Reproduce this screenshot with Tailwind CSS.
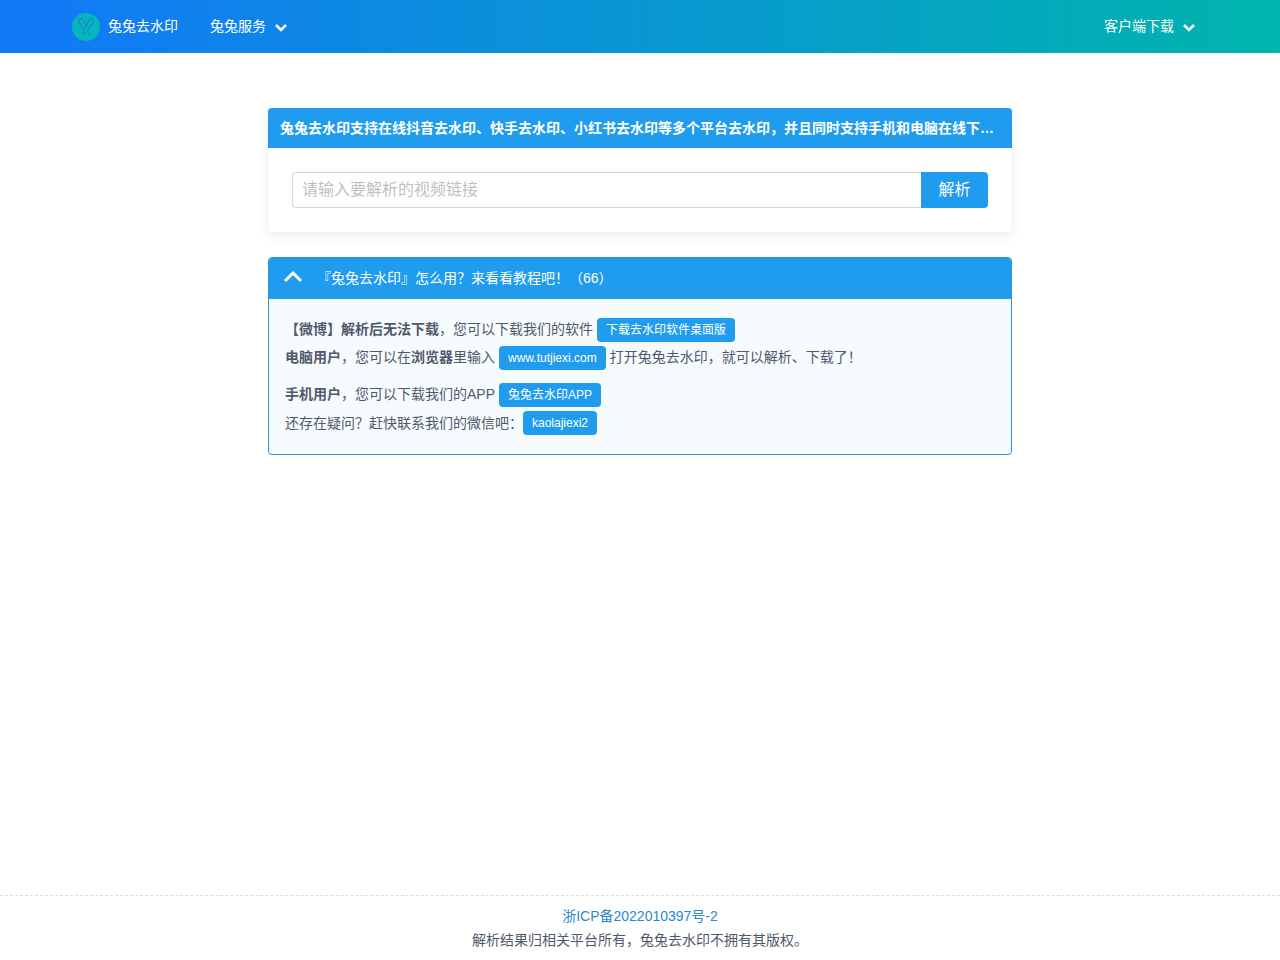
<!DOCTYPE html>
<html lang="zh-CN">
<head>
<meta charset="utf-8">
<meta name="viewport" content="width=device-width, initial-scale=1">
<title>兔兔去水印</title>
<script src="https://cdn.jsdelivr.net/npm/@tailwindcss/browser@4"></script>
</head>
<body class="flex min-h-screen flex-col bg-white font-['Liberation_Sans','Noto_Sans_CJK_SC',sans-serif] text-sm leading-6 text-[#50596c]">
<header class="bg-linear-to-r/srgb from-[#1278f8] to-[#00b5ad] text-white">
  <nav class="mx-auto flex h-[53px] max-w-[1152px] items-center px-2">
    <a href="#" class="flex items-center gap-2">
      <svg class="size-7" viewBox="0 0 28 28" fill="none" aria-hidden="true">
        <circle cx="14" cy="14" r="14" fill="#06b6bb"/>
        <path d="M10.3 21.2c1.7-.6 2.4-2.5 1.7-4.4L7.3 9.6C6 7.2 7 5.4 8.9 5.5c3.3.3 3.8 5 5.1 9.2 1.3-4.2 1.8-8.9 5.1-9.2 1.9-.1 2.9 1.7 1.6 4.1L16 16.8c-.7 1.9 0 3.8 1.7 4.4" stroke="#168ccb" stroke-width="1.4" stroke-linecap="round" stroke-linejoin="round"/>
      </svg>
      <span class="pb-px">兔兔去水印</span>
    </a>
    <button type="button" class="ml-8 flex items-center gap-2"><span class="pb-px">兔兔服务</span>
      <svg class="size-3.5" viewBox="0 0 14 14" fill="none" stroke="currentColor" stroke-width="2.5" aria-hidden="true"><path d="M2 5l5 5 5-5"/></svg>
    </button>
    <button type="button" class="mr-3 ml-auto flex items-center gap-2"><span class="pb-px">客户端下载</span>
      <svg class="size-3.5" viewBox="0 0 14 14" fill="none" stroke="currentColor" stroke-width="2.5" aria-hidden="true"><path d="M2 5l5 5 5-5"/></svg>
    </button>
  </nav>
</header>

<main class="mx-auto w-full max-w-[744px] flex-1 pt-[55px]">
  <section class="rounded-sm shadow-[0_4px_12px_rgba(0,0,0,0.08)]">
    <h1 class="truncate rounded-t-sm bg-[#209cee] px-3 py-2 font-bold text-white">兔兔去水印支持在线抖音去水印、快手去水印、小红书去水印等多个平台去水印，并且同时支持手机和电脑在线下载视频</h1>
    <form class="flex p-6">
      <input type="text" aria-label="视频链接" placeholder="请输入要解析的视频链接" class="h-9 min-w-0 flex-1 rounded-l-sm border border-r-0 border-[#d5d8d8] px-[9px] text-base placeholder:text-[#bfbfbf]">
      <button type="button" class="h-9 w-[67px] rounded-r-sm bg-[#209cee] text-base text-white">解析</button>
    </form>
  </section>

  <section class="mt-[25px] overflow-hidden rounded-sm border border-[#2b95cf] bg-[#f6fbfe]">
    <button type="button" aria-expanded="true" class="flex h-[41px] w-full items-center gap-[14px] bg-[#209cee] px-[14px] pb-0.5 text-left text-white">
      <svg class="size-5" viewBox="0 0 20 20" fill="none" stroke="currentColor" stroke-width="3" aria-hidden="true"><path d="M2 13l8-8 8 8"/></svg>
      <span>『兔兔去水印』怎么用？来看看教程吧！（66）</span>
    </button>
    <div class="px-4 py-[17px]">
      <p class="flex h-7 items-center gap-1"><span class="pb-0.5"><strong>【微博】解析后无法下载</strong>，您可以下载我们的软件</span><a href="#" class="h-6 rounded-sm bg-[#209cee] px-[9px] text-xs leading-6 text-white">下载去水印软件桌面版</a></p>
      <p class="flex h-7 items-center gap-1"><span class="pb-0.5"><strong>电脑用户</strong>，您可以在<strong>浏览器</strong>里输入</span><a href="#" class="h-6 rounded-sm bg-[#209cee] px-[9px] text-xs leading-6 text-white">www.tutjiexi.com</a><span class="pb-0.5">打开兔兔去水印，就可以解析、下载了！</span></p>
      <p class="mt-[9px] flex h-7 items-center gap-1"><span class="pb-0.5"><strong>手机用户</strong>，您可以下载我们的APP</span><a href="#" class="h-6 rounded-sm bg-[#209cee] px-[9px] text-xs leading-6 text-white">兔兔去水印APP</a></p>
      <p class="flex h-7 items-center"><span>还存在疑问？赶快联系我们的微信吧：</span><span class="h-6 rounded-sm bg-[#209cee] px-[9px] text-xs leading-6 text-white">kaolajiexi2</span></p>
    </div>
  </section>
</main>

<footer class="border-t border-dashed border-[#dbdfe0] pt-2 pb-2 text-center">
  <p><a href="#" class="text-[#2c87d0]">浙ICP备2022010397号-2</a></p>
  <p>解析结果归相关平台所有，兔兔去水印不拥有其版权。</p>
</footer>
</body>
</html>
